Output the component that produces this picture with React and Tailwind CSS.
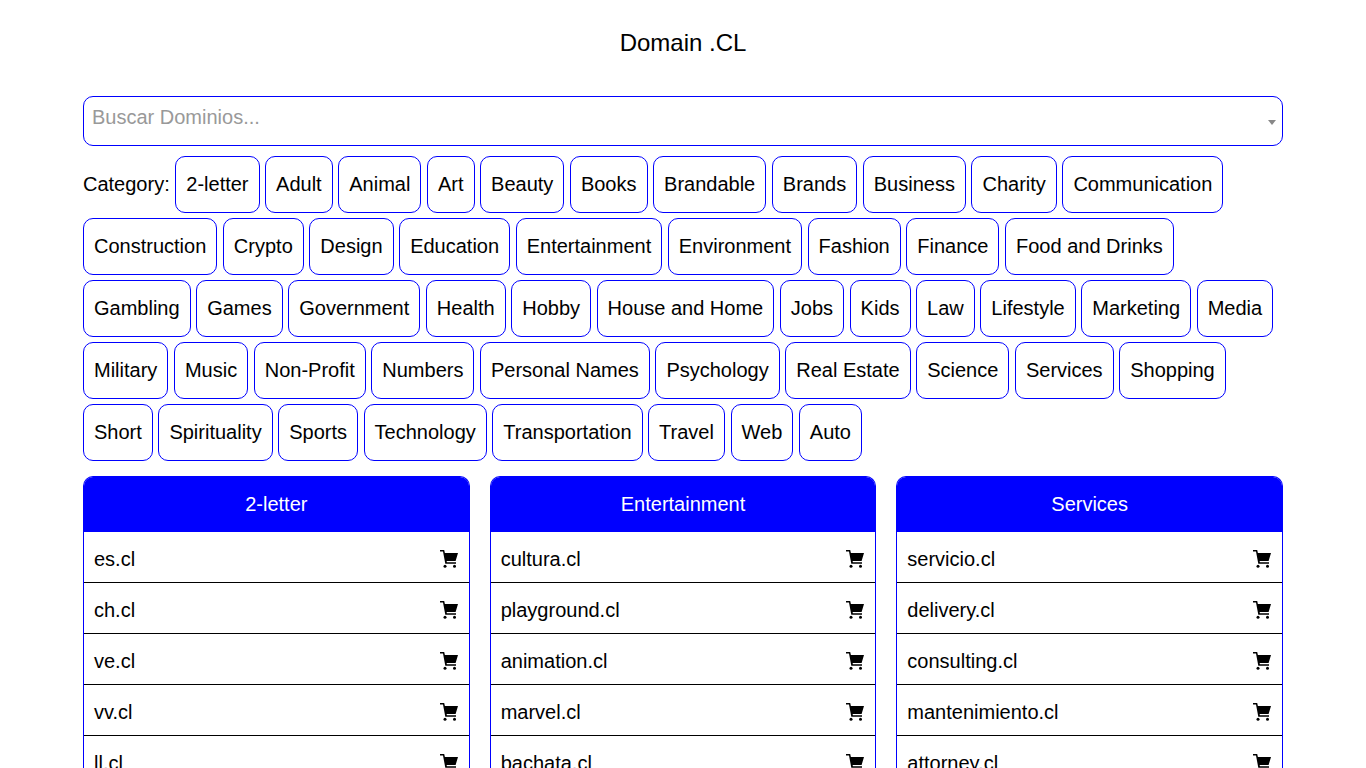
const categories = ["2-letter","Adult","Animal","Art","Beauty","Books","Brandable","Brands","Business","Charity","Communication","Construction","Crypto","Design","Education","Entertainment","Environment","Fashion","Finance","Food and Drinks","Gambling","Games","Government","Health","Hobby","House and Home","Jobs","Kids","Law","Lifestyle","Marketing","Media","Military","Music","Non-Profit","Numbers","Personal Names","Psychology","Real Estate","Science","Services","Shopping","Short","Spirituality","Sports","Technology","Transportation","Travel","Web","Auto"];
const panels = [
  { title: "2-letter", items: ["es.cl","ch.cl","ve.cl","vv.cl","ll.cl"] },
  { title: "Entertainment", items: ["cultura.cl","playground.cl","animation.cl","marvel.cl","bachata.cl"] },
  { title: "Services", items: ["servicio.cl","delivery.cl","consulting.cl","mantenimiento.cl","attorney.cl"] },
];

function Cart() {
  return (
    <svg viewBox="0 0 18 18" className="w-[18px] h-[18px] shrink-0 fill-black" aria-hidden="true">
      <path d="M0 0h4.2l.7 3H18l-2.4 8H6.6l.3 1.3H16v1.4H5.3L3 1.4H0z" />
      <circle cx="5" cy="16.2" r="1.5" />
      <circle cx="14.5" cy="16.2" r="1.5" />
    </svg>
  );
}

export default function App() {
  return (
    <div className="h-screen overflow-hidden bg-white text-black text-[20px] font-['Liberation_Sans',Arial,sans-serif]">
      <div className="w-[1200px] mx-auto">
        <h1 className="h-[96px] pt-[28px] text-center text-[24px] leading-[30px] font-normal">Domain .CL</h1>

        <div className="relative h-[50px] border border-[#0000ff] rounded-[10px] px-2 pt-[5px] text-[#999999] leading-[30px]">
          Buscar Dominios...
          <span className="absolute right-[6px] top-[23px] w-0 h-0 border-x-4 border-x-transparent border-t-[5px] border-t-[#888888]" />
        </div>

        <div className="mt-[10px] flex flex-wrap items-center gap-x-[5.57px] gap-y-[5px]">
          <span className="pb-[2px]">Category:</span>
          {categories.map((c) => (
            <button key={c} className="h-[57px] px-[10px] pb-[2px] border border-[#0000ff] rounded-[10px] bg-white text-black text-[20px]">
              {c}
            </button>
          ))}
        </div>

        <div className="mt-[15px] grid grid-cols-3 gap-x-[20px]">
          {panels.map((p) => (
            <div key={p.title} className="border-x border-t border-[#0000ff] rounded-t-[10px] overflow-hidden">
              <div className="h-[55px] pb-[2px] flex items-center justify-center bg-[#0000ff] text-white">
                {p.title}
              </div>
              {p.items.map((it) => (
                <div key={it} className="h-[51px] pt-[3px] flex items-center justify-between pl-[10px] pr-[11px] border-b border-black">
                  <span>{it}</span>
                  <Cart />
                </div>
              ))}
            </div>
          ))}
        </div>
      </div>
    </div>
  );
}
